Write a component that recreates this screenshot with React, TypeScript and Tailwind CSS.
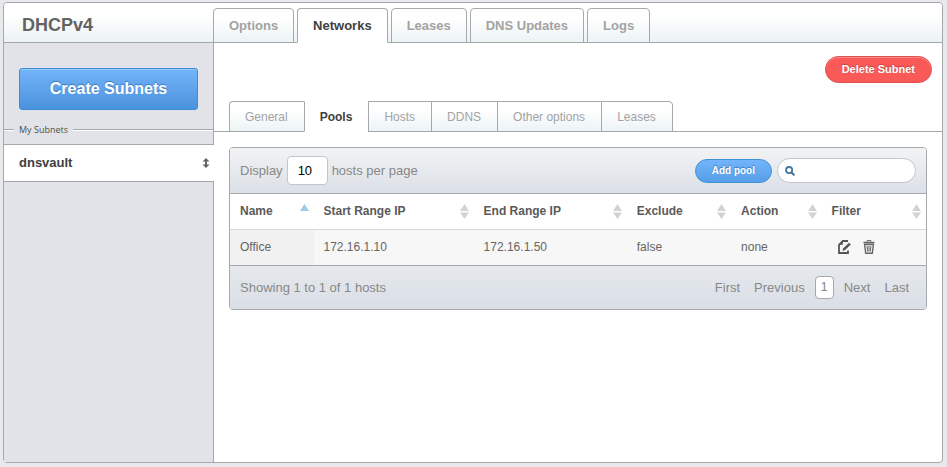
import React from "react";
import clsx from "clsx";

const mainTabs = ["Options", "Networks", "Leases", "DNS Updates", "Logs"];
const subTabs = ["General", "Pools", "Hosts", "DDNS", "Other options", "Leases"];

const columns = [
  { label: "Name", width: "w-[12%]", sorted: true },
  { label: "Start Range IP", width: "w-[23%]", sorted: false },
  { label: "End Range IP", width: "w-[22%]", sorted: false },
  { label: "Exclude", width: "w-[15%]", sorted: false },
  { label: "Action", width: "w-[13%]", sorted: false },
  { label: "Filter", width: "w-[15%]", sorted: false },
];

const pools = [
  { name: "Office", start: "172.16.1.10", end: "172.16.1.50", exclude: "false", action: "none" },
];

const SortIcon: React.FC<{ sorted: boolean }> = ({ sorted }) =>
  sorted ? (
    <svg width="9" height="15" viewBox="0 0 9 15" aria-hidden="true">
      <path d="M4.5 0 9 7H0z" fill="#9ccbe4" />
    </svg>
  ) : (
    <svg width="9" height="15" viewBox="0 0 9 15" aria-hidden="true">
      <path d="M4.5 0 9 7H0zM0 8.5h9L4.5 15z" fill="#d3d3d3" />
    </svg>
  );

const EditIcon: React.FC = () => (
  <svg width="13" height="14" viewBox="0 0 13 14" fill="none" aria-hidden="true">
    <path d="M10 1H4.8L1 4.8V13h9v-2.5" stroke="#555" strokeWidth="1.8" />
    <path d="M1 4.8 4.8 1v3.8z" fill="#555" />
    <path d="M11 2.8 12.8 4.6 7.2 10 4.4 10.9 5.3 8.2z" fill="#555" />
  </svg>
);

const TrashIcon: React.FC = () => (
  <svg width="12" height="14" viewBox="0 0 12 14" fill="none" stroke="#666" aria-hidden="true">
    <path d="M4 1.5V.6h4v.9" />
    <path d="M.5 2.5h11" strokeWidth="1.6" />
    <path d="M1.6 4.2 2.7 13.2h6.6l1.1-9z" strokeWidth="1.4" />
    <path d="M4 5.5 4.7 11.5M6 5.5v6M8 5.5l-.7 6" />
  </svg>
);

const Header: React.FC = () => (
  <header className="flex h-10 items-end border-b border-[#a6a9ac] bg-linear-to-b from-white from-30% to-[#ecf3f4] rounded-t">
    <h1 className="w-[209px] shrink-0 self-center pl-[18px] pt-1 text-lg font-bold text-[#636363]">
      DHCPv4
    </h1>
    <nav className="-mb-px flex gap-[3px]">
      {mainTabs.map((tab) => (
        <a
          key={tab}
          href="#"
          className={clsx(
            "h-[35px] rounded-t border px-[15px] text-[13px] leading-[34px] font-bold whitespace-nowrap border-[#a6a9ac]",
            tab === "Networks"
              ? "border-b-white bg-white text-[#404040]"
              : "bg-linear-to-b from-white from-30% to-[#ecf3f4] text-[#a3a3a3]"
          )}
        >
          {tab}
        </a>
      ))}
    </nav>
  </header>
);

const Sidebar: React.FC = () => (
  <aside className="flex w-[210px] shrink-0 flex-col bg-[#e2e3e9]">
    <div className="border-r border-[#a6a9ac] px-[15px] pt-[25px] pb-3">
      <button className="h-[42px] w-full rounded-[3px] border border-[#3b8fd0] bg-linear-to-b from-[#74b4fb] to-[#4a92dc] text-base font-bold text-white inset-shadow-[0_1px_0_#96c9ff] text-shadow-[0_-1px_1px_#3a78b8]">
        Create Subnets
      </button>
    </div>
    <div className="flex h-4 items-center gap-[5px] border-r border-[#a6a9ac]">
      <span className="h-0.5 w-2.5 border-t border-[#a6a9ac] bg-white" />
      <h2 className="font-['Open_Sans',sans-serif] text-[9px] leading-3 text-[#4b5344]">My Subnets</h2>
      <span className="h-0.5 grow border-t border-[#a6a9ac] bg-white" />
    </div>
    <div className="h-1.5 border-r border-[#a6a9ac]" />
    <a
      href="#"
      className="flex h-[38px] items-center justify-between border-y border-[#a6a9ac] bg-white pr-1 pl-[15px] text-[13px] font-bold text-[#404040]"
    >
      dnsvault
      <svg width="8" height="10" viewBox="0 0 8 10" aria-hidden="true">
        <path d="M4 0 7.5 3.5H5v3h2.5L4 10 .5 6.5H3v-3H.5z" fill="#666" />
      </svg>
    </a>
    <div className="grow border-r border-[#a6a9ac]" />
  </aside>
);

const SubTabs: React.FC = () => (
  <nav className="flex border-b border-[#a6a9ac] pl-[15px]">
    {subTabs.map((tab) => (
      <a
        key={tab}
        href="#"
        className={clsx(
          "-mb-px h-[31px] border border-r-0 border-[#a6a9ac] pr-4 pl-[15px] text-xs leading-[30px] whitespace-nowrap first:rounded-tl last:rounded-tr last:border-r",
          tab === "Pools"
            ? "border-t-white border-b-white bg-white font-bold text-[#404040]"
            : "bg-linear-to-b from-white from-30% to-[#ecf3f4] text-[#a3a3a3]"
        )}
      >
        {tab}
      </a>
    ))}
  </nav>
);

const PoolsTable: React.FC = () => (
  <section className="mx-[15px] mt-[15px] overflow-hidden rounded border border-[#a6a9ac] text-[13px] text-[#888]">
    <div className="flex h-[46px] items-center border-b border-[#a6a9ac] bg-linear-to-b from-[#f2f3f4] to-[#dbe0e7] px-2.5">
      <label className="flex items-center gap-1">
        Display
        <select
          defaultValue="10"
          className="h-[29px] w-[41px] appearance-none rounded border border-[#c3c6ca] bg-white pl-2.5 text-[13px] text-black"
        >
          <option>10</option>
          <option>25</option>
          <option>50</option>
        </select>
        hosts per page
      </label>
      <button className="ml-auto h-6 rounded-full border border-[#3d93d3] bg-linear-to-b from-[#72b4fa] to-[#569fe8] px-4 text-[10px] font-bold text-white text-shadow-[0_-1px_1px_#3a78b8]">
        Add pool
      </button>
      <label className="ml-[5px] flex h-[25px] w-[139px] items-center rounded-full border border-[#c3c6ca] bg-white pr-3 pl-[7px]">
        <svg width="10" height="10" viewBox="0 0 9 9" fill="none" stroke="#44779f" aria-hidden="true" className="shrink-0">
          <circle cx="3.7" cy="3.7" r="2.8" strokeWidth="1.6" />
          <path d="M5.8 5.8 8.4 8.4" strokeWidth="1.8" />
        </svg>
        <input type="search" aria-label="Search" className="ml-1 w-full min-w-0 text-xs outline-none" />
      </label>
    </div>

    <table className="w-full table-fixed text-left text-xs text-[#666]">
      <thead>
        <tr className="h-[35px] border-b border-[#d8d8d8] bg-white">
          {columns.map((col) => (
            <th key={col.label} className={clsx("pr-[5px] pl-2.5 font-bold text-[#5a5a5a]", col.width)}>
              <div className="flex items-center justify-between">
                {col.label}
                <SortIcon sorted={col.sorted} />
              </div>
            </th>
          ))}
        </tr>
      </thead>
      <tbody>
        {pools.map((pool) => (
          <tr key={pool.name} className="h-9 bg-[#f7f7f7]">
            <td className="bg-[#f1f1f1] pl-2.5">{pool.name}</td>
            <td className="pl-2.5">{pool.start}</td>
            <td className="pl-2.5">{pool.end}</td>
            <td className="pl-2.5">{pool.exclude}</td>
            <td className="pl-2.5">{pool.action}</td>
            <td className="pl-4">
              <div className="flex items-center gap-3">
                <button aria-label="Edit pool">
                  <EditIcon />
                </button>
                <button aria-label="Delete pool">
                  <TrashIcon />
                </button>
              </div>
            </td>
          </tr>
        ))}
      </tbody>
    </table>

    <footer className="flex h-11 items-center justify-between border-t border-[#a6a9ac] bg-linear-to-b from-[#e5e9ed] to-[#dadfe6] pr-[17px] pl-2.5">
      <p>Showing 1 to 1 of 1 hosts</p>
      <nav className="flex items-center">
        <a href="#" className="mr-3.5">First</a>
        <a href="#" className="mr-2.5">Previous</a>
        <a href="#" className="h-[23px] w-[19px] rounded border border-[#a6a9ac] bg-white text-center leading-5">
          1
        </a>
        <a href="#" className="ml-2.5">Next</a>
        <a href="#" className="ml-3.5">Last</a>
      </nav>
    </footer>
  </section>
);

const App: React.FC = () => {
  return (
    <div className="flex min-h-screen flex-col bg-[#e7e9ed] pt-0.5 pr-1 pb-1 pl-[3px] font-['Liberation_Sans',Arial,sans-serif]">
      <div className="flex grow flex-col rounded border border-[#a6a9ac] bg-white">
        <Header />
        <div className="flex grow">
          <Sidebar />
          <main className="min-w-0 grow">
            <div className="flex justify-end pt-[13px] pr-2.5 pb-[18px]">
              <button className="h-[27px] rounded-full border border-[#e0504e] bg-[#f95a58] px-4 text-[11px] font-bold text-white inset-shadow-[0_1px_0_#ff8a86] text-shadow-[0_-1px_1px_#c04040]">
                Delete Subnet
              </button>
            </div>
            <SubTabs />
            <PoolsTable />
          </main>
        </div>
      </div>
    </div>
  );
};

export default App;
